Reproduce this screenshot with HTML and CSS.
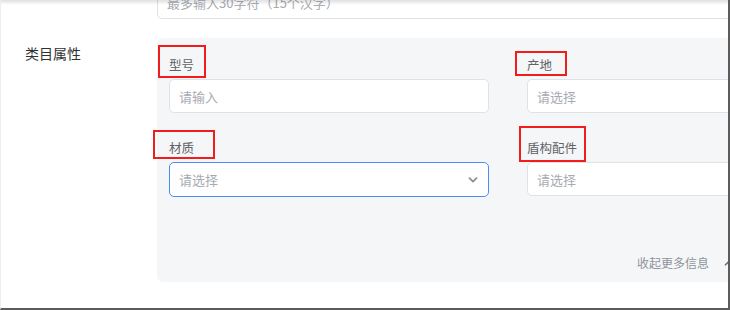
FILE: index.html
```html
<!DOCTYPE html>
<html lang="zh-CN">
<head>
    <meta charset="UTF-8">
    <meta name="viewport" content="width=device-width, initial-scale=1.0">
    <title>类目属性</title>
    <link rel="stylesheet" href="styles.css">
</head>
<body>

    <div class="frame">
        <div class="form">
            <!-- Previous field, scrolled partly out of view -->
            <div class="form-row">
                <div class="form-label"></div>
                <div class="form-content">
                    <div class="text-input wide">
                        <span class="placeholder">最多输入30字符（15个汉字）</span>
                    </div>
                </div>
            </div>

            <div class="form-row attr-row">
                <div class="form-label">类目属性</div>
                <div class="form-content">
                    <div class="attr-panel">
                        <div class="attr-grid">
                            <div class="field">
                                <div class="field-label">型号</div>
                                <div class="text-input">
                                    <span class="placeholder">请输入</span>
                                </div>
                            </div>
                            <div class="field">
                                <div class="field-label">产地</div>
                                <div class="text-input">
                                    <span class="placeholder">请选择</span>
                                </div>
                            </div>
                            <div class="field">
                                <div class="field-label">材质</div>
                                <div class="text-input select is-focus">
                                    <span class="placeholder">请选择</span>
                                    <svg class="chevron" width="10" height="6" viewBox="0 0 10 6">
                                        <path d="M1.5 1.2 L5 4.6 L8.5 1.2" fill="none" stroke="#8d9096" stroke-width="1.8" stroke-linecap="round" stroke-linejoin="round"/>
                                    </svg>
                                </div>
                            </div>
                            <div class="field">
                                <div class="field-label">盾构配件</div>
                                <div class="text-input">
                                    <span class="placeholder">请选择</span>
                                </div>
                            </div>
                        </div>

                        <div class="panel-footer">
                            <span>收起更多信息</span>
                            <svg class="arrow-up" width="10" height="6" viewBox="0 0 10 6">
                                <path d="M1.5 4.8 L5 1.4 L8.5 4.8" fill="none" stroke="#6b6e74" stroke-width="1.6" stroke-linecap="round" stroke-linejoin="round"/>
                            </svg>
                        </div>
                    </div>
                </div>
            </div>
        </div>

        <!-- Red annotation boxes -->
        <div class="mark mark-model"></div>
        <div class="mark mark-origin"></div>
        <div class="mark mark-material"></div>
        <div class="mark mark-parts"></div>
    </div>

</body>
</html>
```

FILE: styles.css
```css
body {
    margin: 0;
    padding: 0;
    background-color: #ffffff;
    font-family: "Noto Sans CJK SC", "Noto Sans", sans-serif;
}

.frame {
    position: relative;
    width: 730px;
    height: 310px;
    box-sizing: border-box;
    border-left: 1px solid #ececf6;
    border-right: 2px solid #5c5c5c;
    border-bottom: 2px solid #5c5c5c;
    overflow: hidden;
    background: #ffffff;
}

/* shadow of the fixed header above */
.frame::before {
    content: "";
    position: absolute;
    top: 0;
    left: 0;
    right: 0;
    height: 5px;
    background: linear-gradient(to bottom, rgba(0, 0, 0, 0.12), rgba(0, 0, 0, 0));
    z-index: 2;
}

.form {
    margin-top: -15px;
}

.form-row {
    display: flex;
}

.form-label {
    width: 156px;
    flex-shrink: 0;
    padding-left: 24px;
    box-sizing: border-box;
    font-size: 14px;
    line-height: 22px;
    color: #303133;
}

.form-content {
    flex-shrink: 0;
}

.attr-row {
    margin-top: 19px;
}

.attr-row .form-label {
    padding-top: 4px;
}

.text-input {
    display: flex;
    align-items: center;
    height: 34px;
    padding: 0 10px 0 9px;
    box-sizing: border-box;
    border: 1px solid #dfe2e8;
    border-radius: 5px;
    background: #ffffff;
}

.text-input.wide {
    width: 600px;
}

.placeholder {
    font-size: 13px;
    color: #a8abb2;
}

.select {
    justify-content: space-between;
}

.select.is-focus {
    height: 35px;
    border-color: #4b8bf5;
}

.attr-panel {
    width: 589px;
    padding: 16px 12px 9px 12px;
    box-sizing: border-box;
    background: #f5f6f8;
    border-radius: 6px;
}

.attr-grid {
    display: grid;
    grid-template-columns: 320px 1fr;
    column-gap: 38px;
    row-gap: 24px;
    align-items: start;
}

.field-label {
    font-size: 12.5px;
    line-height: 22px;
    color: #606266;
    margin-bottom: 3px;
}

.field .text-input {
    width: 100%;
}

.panel-footer {
    display: flex;
    justify-content: flex-end;
    align-items: center;
    margin-top: 56px;
    line-height: 20px;
    font-size: 12px;
    color: #909399;
}

.arrow-up {
    margin-left: 15px;
}

/* annotation boxes */
.mark {
    position: absolute;
    border: 2px solid #f21c1c;
    box-sizing: border-box;
    z-index: 3;
}

.mark-model {
    left: 157px;
    top: 45px;
    width: 48px;
    height: 33px;
}

.mark-origin {
    left: 514px;
    top: 51px;
    width: 52px;
    height: 25px;
}

.mark-material {
    left: 152px;
    top: 130px;
    width: 62px;
    height: 29px;
}

.mark-parts {
    left: 518px;
    top: 126px;
    width: 67px;
    height: 36px;
}
```
